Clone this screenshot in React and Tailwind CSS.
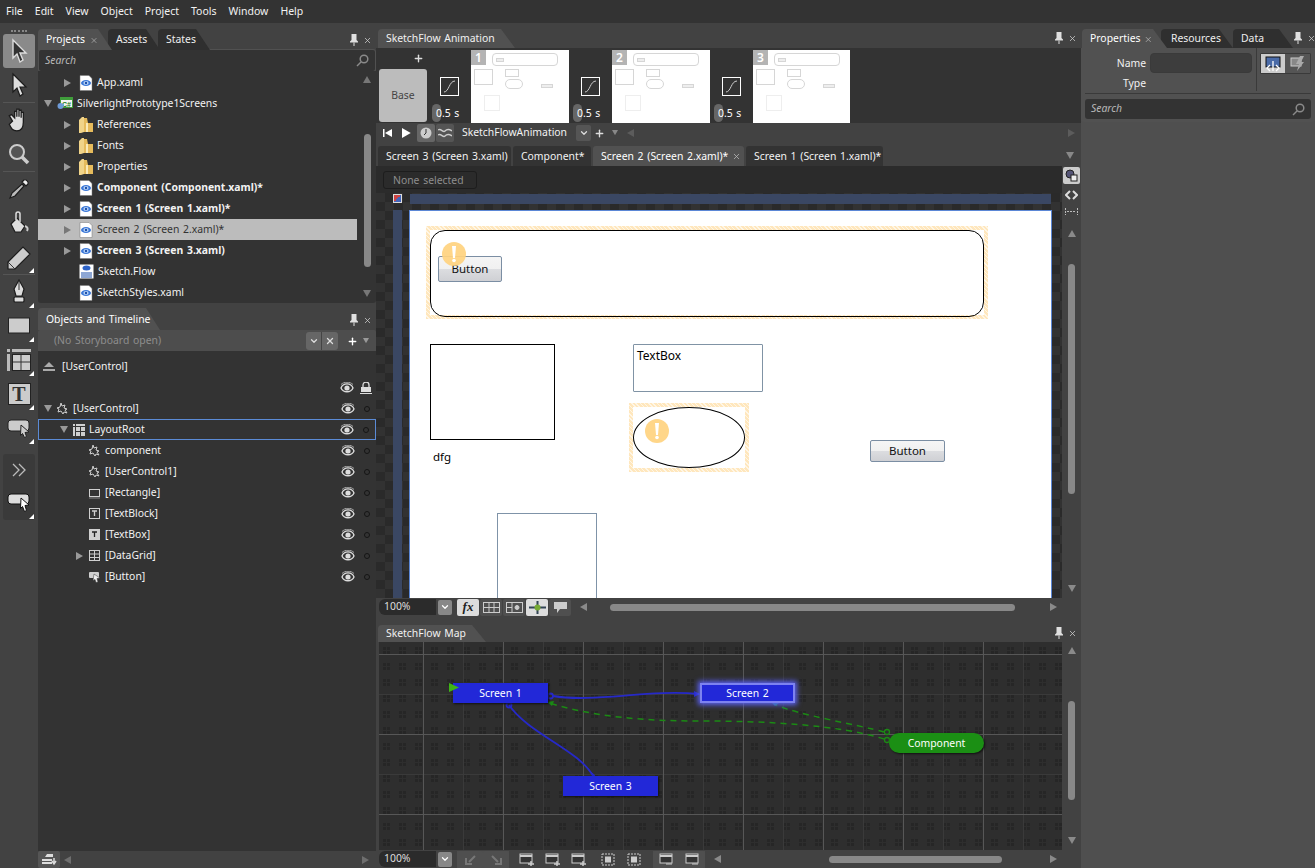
import { ChevronDown, Plus, X } from "lucide-react";

const ui = "font-['Noto_Sans',sans-serif]";

function Tri({ dir = "right", className = "" }) {
  const pts = { right: "1,1 8,5 1,9", left: "8,1 1,5 8,9", up: "5,1 9,8 1,8", down: "1,1 9,1 5,8" }[dir];
  return (
    <svg width="10" height="10" viewBox="0 0 10 10" className={`shrink-0 ${className}`}>
      <polygon points={pts} fill="currentColor" />
    </svg>
  );
}

function Pin() {
  return (
    <svg width="10" height="12" viewBox="0 0 10 12">
      <path d="M2.5 0h5v6l1.5 1.5v1H1v-1L2.5 6z" fill="#e0e0e0" />
      <path d="M5 8.5V12" stroke="#e0e0e0" />
    </svg>
  );
}

function PanelActions() {
  return (
    <div className="flex items-center gap-[4px] text-[#d0d0d0]">
      <Pin />
      <X size={9} strokeWidth={2} />
    </div>
  );
}

function Tab({ children, active, className = "" }) {
  return (
    <div
      className={`flex h-full items-center whitespace-nowrap pl-[8px] pr-[14px] pt-px rounded-tl-[4px] [clip-path:polygon(0_0,calc(100%-14px)_0,100%_100%,0_100%)] ${
        active ? "bg-[#515151] text-white" : "bg-[#2f2f2f] text-[#eee]"
      } ${className}`}
    >
      {children}
    </div>
  );
}

function XamlIcon() {
  return (
    <svg width="14" height="16" viewBox="0 0 14 16" className="shrink-0">
      <path d="M1 .5h9l3 3v12H1z" fill="#fff" stroke="#777" strokeWidth=".5" />
      <ellipse cx="7" cy="8" rx="5" ry="3" fill="#3b78d8" />
      <ellipse cx="7" cy="8" rx="2.6" ry="2" fill="#bcd6f7" />
      <circle cx="7" cy="8" r="1.2" fill="#1d4fa8" />
    </svg>
  );
}

function FolderIcon() {
  return (
    <svg width="14" height="16" viewBox="0 0 14 16" className="shrink-0">
      <path d="M0 3l3-3h2v15l-3 1H0z" fill="#f1d489" />
      <path d="M5 1h3l1 5h5v9H5z" fill="#e6bb5c" />
      <path d="M7 6h2v9H7z" fill="#fbeab8" />
    </svg>
  );
}

function ProjectIcon() {
  return (
    <svg width="16" height="14" viewBox="0 0 16 14" className="-ml-[2px] shrink-0">
      <rect x="3" y="0" width="13" height="11" fill="#3f9d3b" />
      <rect x="4" y="3" width="11" height="7" fill="#f3f3f3" />
      <text x="5" y="9.5" fontSize="7" fontWeight="700" fill="#1e7d1a" fontFamily="Liberation Sans">C#</text>
      <circle cx="3.5" cy="9" r="3" fill="#6e9bd8" />
    </svg>
  );
}

function FlowIcon() {
  return (
    <svg width="15" height="15" viewBox="0 0 15 15" className="shrink-0">
      <rect x=".5" y=".5" width="14" height="14" fill="#fff" />
      <ellipse cx="7.5" cy="4" rx="4" ry="2.5" fill="#2d63c8" />
      <path d="M2 9h11M2 11h11M2 13h11" stroke="#1d4fa8" />
    </svg>
  );
}

function TreeRow({ arrow, indent, icon, children, bold, selected, arrowDown }) {
  return (
    <div className={`flex h-[21px] items-center ${selected ? "bg-[#bcbcbc] text-[#333]" : ""} ${bold ? "font-bold" : ""}`} style={{ paddingLeft: indent }}>
      <span className="mr-[6px] flex w-[10px] shrink-0 justify-center">
        {arrow && <Tri dir={arrowDown ? "down" : "right"} className={selected ? "text-[#777]" : "text-[#999]"} />}
      </span>
      {icon}
      <span className="ml-[4px] whitespace-nowrap">{children}</span>
    </div>
  );
}

function Eye() {
  return (
    <svg width="14" height="12" viewBox="0 0 14 12">
      <path d="M1 6c2-5.500 10-5.500 12 0-2 5-10 5-12 0z" fill="none" stroke="#ddd" strokeWidth="1.300" />
      <circle cx="7" cy="6" r="2.600" fill="#ddd" />
      <path d="M1 2.500C4-.5 10-.5 13 2.500" fill="none" stroke="#aaa" />
    </svg>
  );
}

function Dot() {
  return <span className="block h-[6px] w-[6px] rounded-full border border-[#151515]" />;
}

function ObjIcon({ kind }) {
  const c = "#cfcfcf";
  if (kind === "comp")
    return (
      <svg width="12" height="12" viewBox="0 0 12 12" className="shrink-0">
        <path d="M4 0l1 3 3-1-1 3 3 1-2 1 2 3-3-1-1 2-2-3-3 1 1-3-2-1 3-1z" fill="none" stroke={c} />
      </svg>
    );
  if (kind === "grid")
    return (
      <svg width="12" height="12" viewBox="0 0 12 12" className="shrink-0">
        <path d="M0 0h2v2H0zM3 0h9v2H3zM0 3h2v9H0z" fill={c} />
        <path d="M3 3h4v4H3zM8 3h4v4H8zM3 8h4v4H3zM8 8h4v4H8z" fill={c} />
      </svg>
    );
  if (kind === "rect")
    return (
      <svg width="12" height="12" viewBox="0 0 12 12" className="shrink-0">
        <rect x=".5" y="2.500" width="10" height="7" fill="none" stroke={c} />
        <path d="M0 11h11" stroke="#888" />
      </svg>
    );
  if (kind === "t" || kind === "tb")
    return (
      <svg width="12" height="12" viewBox="0 0 12 12" className="shrink-0">
        <rect x=".5" y=".5" width="10" height="10" fill={kind === "tb" ? c : "none"} stroke={c} />
        <path d="M3 3h5M5.500 3v5" stroke={kind === "tb" ? "#222" : c} strokeWidth="1.300" />
      </svg>
    );
  if (kind === "dg")
    return (
      <svg width="12" height="12" viewBox="0 0 12 12" className="shrink-0">
        <rect x=".5" y=".5" width="10" height="10" fill="none" stroke={c} />
        <path d="M1 4h9M1 7.500h9M5.500 1v9" stroke={c} />
      </svg>
    );
  return (
    <svg width="12" height="12" viewBox="0 0 12 12" className="shrink-0">
      <rect x="0" y="1" width="10" height="6" rx="1" fill={c} />
      <path d="M5 3l6 4-3 .5 1 3.500-2 .5-1-3-2 1z" fill="#eee" stroke="#333" strokeWidth=".5" />
    </svg>
  );
}

function ObjRow({ indent, kind, arrow, arrowDown, children, selected }) {
  return (
    <div className={`flex h-[21px] items-center pr-[5px] ${selected ? "border border-[#5b8bd6]" : ""}`} style={{ paddingLeft: indent }}>
      <span className="flex w-[10px] shrink-0 justify-center">{arrow && <Tri dir={arrowDown ? "down" : "right"} className="text-[#999]" />}</span>
      <span className="ml-[4px]"><ObjIcon kind={kind} /></span>
      <span className="ml-[4px] whitespace-nowrap">{children}</span>
      <span className="ml-auto mr-[9px]"><Eye /></span>
      <span className="mr-[1px]"><Dot /></span>
    </div>
  );
}

function Tool({ children, active, corner }) {
  return (
    <div className={`relative flex h-[34px] w-[32px] shrink-0 items-center justify-center rounded-[3px] ${active ? "bg-[#8a8a8a]" : ""}`}>
      {children}
      {corner && <span className="absolute bottom-[1px] right-[1px] h-0 w-0 border-b-[5px] border-l-[5px] border-b-white border-l-transparent" />}
    </div>
  );
}

const toolStroke = { stroke: "#1c1c1c", strokeWidth: 1.2 };

function Toolbar() {
  return (
    <div className="flex w-[38px] shrink-0 flex-col items-center pt-[2px]">
      <div className="mb-[2px] mt-[2px] h-[2px] w-[16px] border-t-2 border-dotted border-[#888]" />
      <Tool active>
        <svg width="22" height="26" viewBox="0 0 22 26"><path d="M5 2l13 13h-6l3 7-3 2-3-8-4 4z" fill="#333" stroke="#ddd" strokeWidth="1.400" /></svg>
      </Tool>
      <Tool>
        <svg width="22" height="26" viewBox="0 0 22 26"><path d="M5 2l13 13h-6l3 7-3 2-3-8-4 4z" fill="#ddd" {...toolStroke} /></svg>
      </Tool>
      <div className="h-px w-[32px] shrink-0 bg-[#555]" />
      <Tool>
        <svg width="26" height="26" viewBox="0 0 24 24"><path d="M6 13L3 8l2-1 3 3V4h2v5-7h2v7-6h2v7-5h2v9c0 6-3 8-6 8-4 0-5-2-7-6z" fill="#ddd" {...toolStroke} /></svg>
      </Tool>
      <Tool>
        <svg width="24" height="24" viewBox="0 0 24 24"><circle cx="10" cy="10" r="7" fill="#555" stroke="#ccc" strokeWidth="2" /><path d="M15 15l6 6" stroke="#ccc" strokeWidth="3.500" /></svg>
      </Tool>
      <div className="h-px w-[32px] shrink-0 bg-[#555]" />
      <Tool>
        <svg width="24" height="24" viewBox="0 0 24 24"><path d="M3 21l2-5L15 7l2 2L8 19z" fill="#bbb" {...toolStroke} /><path d="M15 5l2-2c2-1 5 2 4 4l-2 2z" fill="#eee" {...toolStroke} /></svg>
      </Tool>
      <Tool>
        <svg width="24" height="24" viewBox="0 0 24 24"><path d="M4 13l6-6 8 8-4 6H8z" fill="#ddd" {...toolStroke} /><path d="M9 9V3a2 2 0 0 1 4 0v8" fill="none" stroke="#ddd" strokeWidth="1.500" /><path d="M18 15c3 1 3 3 2 5" stroke="#ccc" fill="none" strokeWidth="2" /></svg>
      </Tool>
      <Tool corner>
        <svg width="26" height="26" viewBox="0 0 26 26"><path d="M2 18L17 3l7 7-15 15H2z" fill="#ccc" {...toolStroke} /><path d="M2 18l7 7" stroke="#333" /></svg>
      </Tool>
      <div className="h-px w-[32px] shrink-0 bg-[#555]" />
      <Tool corner>
        <svg width="22" height="26" viewBox="0 0 22 26"><path d="M11 1l5 9-2 7H8l-2-7z" fill="#ddd" {...toolStroke} /><path d="M11 2v9" stroke="#333" /><rect x="6" y="18" width="10" height="5" rx="1" fill="#ddd" {...toolStroke} /></svg>
      </Tool>
      <Tool corner>
        <svg width="24" height="20" viewBox="0 0 24 20"><rect x="1.500" y="2" width="21" height="15" fill="#ccc" stroke="#222" /></svg>
      </Tool>
      <Tool corner>
        <svg width="24" height="24" viewBox="0 0 24 24"><path d="M0 1h3v3H0zM5 1h19v3H5zM0 6h3v17H0z" fill="#bbb" /><rect x="5.500" y="6.500" width="18" height="16" fill="#ccc" stroke="#222" /><path d="M14 7v15M6 14h17" stroke="#333" /></svg>
      </Tool>
      <Tool corner>
        <div className="flex h-[22px] w-[23px] items-center justify-center border border-[#222] bg-[#ccc] font-['Liberation_Serif',serif] text-[20px] font-bold leading-none text-[#333]">T</div>
      </Tool>
      <Tool corner>
        <svg width="24" height="22" viewBox="0 0 24 22"><rect x="1" y="3" width="21" height="11" rx="3" fill="#ccc" stroke="#222" /><path d="M14 8l8 7-4 .5 1.500 4-2 1-2-4-2 2z" fill="#ccc" stroke="#222" /></svg>
      </Tool>
      <div className="mt-[9px] flex h-[66px] w-[32px] shrink-0 flex-col items-center rounded-[3px] bg-[#3a3a3a]">
        <div className="flex h-[32px] shrink-0 items-center justify-center">
          <svg width="16" height="16" viewBox="0 0 16 16" fill="none" stroke="#bbb" strokeWidth="1.300"><path d="M2 2l6 6-6 6M8 2l6 6-6 6" /></svg>
        </div>
        <Tool corner>
          <svg width="24" height="22" viewBox="0 0 24 22"><rect x="1" y="2" width="21" height="10" rx="3" fill="#ddd" stroke="#111" /><path d="M14 6l8 7-4 .5 1.500 5-2 1-2-5-2 2z" fill="#fff" stroke="#111" /></svg>
        </Tool>
      </div>
    </div>
  );
}

function VScroll({ top, height, className = "" }) {
  return (
    <div className={`flex w-[18px] shrink-0 flex-col items-center text-[#8a8a8a] ${className}`}>
      <div className="mt-[4px]"><Tri dir="up" /></div>
      <div className="w-[7px] rounded-full bg-[#888]" style={{ marginTop: top, height }} />
      <div className="mt-auto mb-[4px]"><Tri dir="down" /></div>
    </div>
  );
}

function LeftColumn() {
  const objs = [
    ["comp", "component"],
    ["comp", "[UserControl1]"],
    ["rect", "[Rectangle]"],
    ["t", "[TextBlock]"],
    ["tb", "[TextBox]"],
    ["dg", "[DataGrid]", true],
    ["btn", "[Button]"],
  ];
  return (
    <div className="flex w-[338px] shrink-0 flex-col">
      <div className="flex h-[24px] items-end justify-between pr-[4px]">
        <div className="flex h-[21px]">
          <Tab active className="relative z-10 w-[74px]">Projects <X size={9} className="ml-[5px] text-[#bbb]" /></Tab>
          <Tab className="-ml-[4px] w-[52px] pl-[7px]">Assets</Tab>
          <Tab className="-ml-[2px] w-[52px]">States</Tab>
        </div>
        <div className="mb-[4px]"><PanelActions /></div>
      </div>
      <div className="mx-px flex h-[21px] items-center justify-between rounded-[2px] bg-[#333] px-[6px] italic text-[#b8b8b8] shadow-[0_0_0_1px_#515151]">
        Search
        <svg width="13" height="13" viewBox="0 0 13 13" fill="none" stroke="#8a8a8a" strokeWidth="1.500"><circle cx="8" cy="5" r="3.800" /><path d="M5 8l-4 4" /></svg>
      </div>
      <div className="flex h-[232px] rounded-b-[3px] bg-[#333]">
        <div className="w-[319px] shrink-0 pt-px">
          <TreeRow arrow indent={25} icon={<XamlIcon />}>App.xaml</TreeRow>
          <TreeRow arrow arrowDown indent={5} icon={<ProjectIcon />}>SilverlightPrototype1Screens</TreeRow>
          <TreeRow arrow indent={25} icon={<FolderIcon />}>References</TreeRow>
          <TreeRow arrow indent={25} icon={<FolderIcon />}>Fonts</TreeRow>
          <TreeRow arrow indent={25} icon={<FolderIcon />}>Properties</TreeRow>
          <TreeRow arrow bold indent={25} icon={<XamlIcon />}>Component (Component.xaml)*</TreeRow>
          <TreeRow arrow bold indent={25} icon={<XamlIcon />}>Screen 1 (Screen 1.xaml)*</TreeRow>
          <TreeRow arrow selected indent={25} icon={<XamlIcon />}>Screen 2 (Screen 2.xaml)*</TreeRow>
          <TreeRow arrow bold indent={25} icon={<XamlIcon />}>Screen 3 (Screen 3.xaml)</TreeRow>
          <TreeRow indent={25} icon={<FlowIcon />}>Sketch.Flow</TreeRow>
          <TreeRow indent={25} icon={<XamlIcon />}>SketchStyles.xaml</TreeRow>
        </div>
        <VScroll top={49} height={133} className="ml-auto text-[#777]" />
      </div>
      <div className="mt-[5px] flex h-[22px] items-end justify-between pr-[4px]">
        <Tab active className="h-[21px] w-[122px] pt-[3px]">Objects and Timeline</Tab>
        <div className="mb-[4px]"><PanelActions /></div>
      </div>
      <div className="flex h-[21px] items-center rounded-t-[2px] bg-[#4d4d4d] pl-[16px] pr-[5px] pt-px text-[#8e8e8e]">
        (No Storyboard open)
        <div className="ml-auto flex h-[18px] w-[32px] overflow-hidden rounded-[3px] bg-[#666] text-[#ddd]">
          <span className="flex w-1/2 items-center justify-center border-r border-[#444]"><ChevronDown size={10} strokeWidth={3} /></span>
          <span className="flex w-1/2 items-center justify-center"><X size={10} strokeWidth={3} /></span>
        </div>
        <Plus size={11} strokeWidth={3} className="ml-[9px] text-white" />
        <Tri dir="down" className="ml-[3px] scale-75 text-[#999]" />
      </div>
      <div className="flex min-h-0 flex-1 flex-col bg-[#333] pt-[5px]">
        <div className="flex h-[21px] items-center pl-[4px]">
          <svg width="14" height="12" viewBox="0 0 14 12"><path d="M7 1l5 5H2z" fill="#aaa" /><path d="M1 8h12v2H1z" fill="#aaa" /></svg>
          <span className="ml-[6px]">[UserControl]</span>
        </div>
        <div className="flex h-[21px] items-center justify-end pr-[4px]">
          <Eye />
          <svg width="12" height="12" viewBox="0 0 12 12" className="ml-[6px]"><path d="M3 5V3a3 3 0 0 1 6 0v2" fill="none" stroke="#ddd" strokeWidth="1.300" /><rect x="1" y="5" width="10" height="5" fill="#ddd" /><path d="M0 11.500h12" stroke="#ddd" /></svg>
        </div>
        <ObjRow indent={5} kind="comp" arrow arrowDown>[UserControl]</ObjRow>
        <ObjRow indent={20} kind="grid" arrow arrowDown selected>LayoutRoot</ObjRow>
        {objs.map(([kind, label, arrow]) => (
          <ObjRow key={label} indent={37} kind={kind} arrow={arrow}>{label}</ObjRow>
        ))}
      </div>
      <div className="flex h-[17px] shrink-0 items-center bg-[#424242] pr-[5px] text-[#6e6e6e]">
        <div className="flex h-[17px] w-[22px] items-center justify-center rounded-[2px] bg-[#555]">
          <svg width="15" height="12" viewBox="0 0 15 12"><path d="M3 3l2-3h6v3zM0 5h10v2H0zM0 8h10v2H0z" fill="#ddd" /><path d="M12 4v5M10 7l2 3 2-3" stroke="#ddd" fill="none" strokeWidth="1.500" /></svg>
        </div>
        <Tri dir="left" className="ml-[3px]" />
        <Tri dir="right" className="ml-auto" />
      </div>
    </div>
  );
}

function Thumb({ n, w = 98 }) {
  const line = "absolute border border-[#d6d6d6]";
  return (
    <div className="relative h-[73px] shrink-0 bg-white" style={{ width: w }}>
      <div className={`${line} left-[21px] top-[3px] h-[13px] w-[66px] rounded-[4px]`} />
      <div className={`${line} left-[25px] top-[8px] h-[4px] w-[8px] bg-[#eee]`} />
      <div className={`${line} left-[3px] top-[19px] h-[16px] w-[19px]`} />
      <div className={`${line} left-[34px] top-[19px] h-[8px] w-[14px]`} />
      <div className={`${line} left-[34px] top-[29px] h-[10px] w-[18px] rounded-full`} />
      <div className={`${line} left-[70px] top-[34px] h-[4px] w-[12px] bg-[#eee]`} />
      <div className={`${line} left-[13px] top-[45px] h-[16px] w-[16px] border-[#eee]`} />
      <div className="absolute left-0 top-0 flex h-[15px] w-[15px] items-center justify-center bg-[#b4b4b4] text-[12px] font-semibold text-white">{n}</div>
    </div>
  );
}

function Transition() {
  return (
    <div className="relative h-[73px] w-[43px] shrink-0">
      <div className="absolute left-[12px] top-[27px] flex h-[19px] w-[19px] items-center justify-center border border-white">
        <svg width="15" height="15" viewBox="0 0 15 15"><path d="M2 13c5 0 5-11 11-11" fill="none" stroke="#ccc" /></svg>
      </div>
      <div className="absolute bottom-[1px] left-[4px] h-[18px] w-[9px] rounded-full bg-[#666]" />
      <div className="absolute bottom-[1px] left-[8px] whitespace-nowrap text-white">0.5 s</div>
    </div>
  );
}

function AnimationPanel() {
  return (
    <div>
      <div className="flex h-[22px] items-end justify-between bg-[#424242] pr-[4px]">
        <div className="ml-[2px] flex h-[19px] w-[137px] items-center rounded-tl-[4px] bg-[#515151] pl-[8px] pt-px [clip-path:polygon(0_0,calc(100%-14px)_0,100%_100%,0_100%)]">SketchFlow Animation</div>
        <div className="mb-[4px]"><PanelActions /></div>
      </div>
      <div className="flex h-[75px] items-start bg-[#333] pt-[2px]">
        <div className="relative h-[73px] w-[52px] shrink-0">
          <Plus size={11} strokeWidth={3} className="absolute left-[37px] top-[3px] text-[#ddd]" />
          <div className="absolute bottom-[1px] left-[3px] flex h-[53px] w-[48px] items-center justify-center rounded-[3px] bg-[#bcbcbc] text-[#444]">Base</div>
        </div>
        <Transition />
        <Thumb n={1} />
        <Transition />
        <Thumb n={2} />
        <Transition />
        <Thumb n={3} w={97} />
      </div>
      <div className="flex h-[20px] items-center bg-[#424242] pl-[7px]">
        <svg width="10" height="10" viewBox="0 0 10 10" className="text-white"><path d="M0 1h1.500v8H0zM9 1v8L2 5z" fill="currentColor" /></svg>
        <Tri dir="right" className="ml-[9px] scale-125 text-white" />
        <div className="ml-[5px] flex h-[18px] w-[18px] items-center justify-center rounded-[2px] bg-[#666]">
          <svg width="12" height="12" viewBox="0 0 12 12"><circle cx="6" cy="6" r="5.500" fill="#ccc" /><path d="M6 2v4l-2 2" stroke="#333" fill="none" /></svg>
        </div>
        <div className="ml-px flex h-[18px] w-[18px] items-center justify-center rounded-[2px] bg-[#555]">
          <svg width="14" height="10" viewBox="0 0 14 10" fill="none" stroke="#ccc" strokeWidth="1.500"><path d="M0 2c3-2 5 3 7 1s4-2 7 0M0 7c3-2 5 3 7 1s4-2 7 0" /></svg>
        </div>
        <span className="ml-[8px] w-[114px]">SketchFlowAnimation</span>
        <div className="flex h-[16px] w-[15px] items-center justify-center rounded-[2px] bg-[#555] text-[#ddd]"><ChevronDown size={10} strokeWidth={3} /></div>
        <Plus size={11} strokeWidth={3} className="ml-[3px] text-[#ddd]" />
        <Tri dir="down" className="ml-[5px] scale-75 text-[#888]" />
        <Tri dir="left" className="ml-[6px] text-[#5c5c5c]" />
        <Tri dir="right" className="ml-auto mr-[4px] text-[#5c5c5c]" />
      </div>
    </div>
  );
}

function DocTab({ children, active, w }) {
  return (
    <div className={`flex h-[20px] items-center whitespace-nowrap rounded-t-[3px] pl-[8px] pt-px ${active ? "bg-[#515151] text-white" : "bg-[#333]"}`} style={{ width: w }}>
      {children}
      {active && <X size={9} className="ml-[4px] text-[#bbb]" />}
    </div>
  );
}

function Hatch({ className = "" }) {
  return <div className={`absolute border-4 [border-image:repeating-linear-gradient(45deg,#ffe7bd_0,#ffe7bd_2px,#fff6e6_2px,#fff6e6_3px)_4] ${className}`} />;
}

function Warn({ className = "" }) {
  return (
    <svg width="24" height="24" viewBox="0 0 24 24" className={`absolute ${className}`}>
      <circle cx="12" cy="12" r="12" fill="#ffd27f" fillOpacity=".92" />
      <path d="M10 4h4l-1 12h-2z" fill="#fff" />
      <circle cx="12" cy="18.500" r="1.800" fill="#fff" />
    </svg>
  );
}

function SkButton({ className = "" }) {
  return (
    <div className={`absolute flex items-center justify-center rounded-[2px] border border-[#7b8ea3] bg-[linear-gradient(#f5f5f5_0,#f0f0f0_50%,#dcdde0_50%,#cfd0d4_100%)] text-[11.500px] text-[#111] ${className}`}>Button</div>
  );
}

function Artboard() {
  return (
    <div className="relative h-[388px] w-[643px] overflow-hidden border-x border-t border-[#5b87d6] bg-white text-black">
      <Hatch className="left-[16px] top-[15px] h-[93px] w-[562px]" />
      <div className="absolute left-[20px] top-[19px] h-[87px] w-[554px] rounded-[15px] border border-black" />
      <SkButton className="left-[28px] top-[45px] h-[26px] w-[64px]" />
      <Warn className="left-[32px] top-[31px]" />
      <div className="absolute left-[20px] top-[133px] h-[96px] w-[125px] border border-black" />
      <div className="absolute left-[23px] top-[237px] text-[11.500px]">dfg</div>
      <div className="absolute left-[223px] top-[133px] h-[48px] w-[130px] rounded-[1px] border border-[#8093a5] pl-[3px] text-[12px] leading-[22px]">TextBox</div>
      <Hatch className="left-[219px] top-[192px] h-[69px] w-[120px]" />
      <div className="absolute left-[223px] top-[196px] h-[61px] w-[112px] rounded-[50%] border border-black" />
      <Warn className="left-[235px] top-[208px]" />
      <SkButton className="left-[460px] top-[229px] h-[22px] w-[75px]" />
      <div className="absolute left-[87px] top-[302px] h-[100px] w-[100px] border border-[#7f93a8]" />
    </div>
  );
}

function ZoomBox() {
  return (
    <div className="flex items-center">
      <div className="flex h-[16px] w-[57px] items-center rounded-l-[6px] bg-[#2b2b2b] pl-[5px] text-[#ddd]">100%</div>
      <div className="ml-[2px] flex h-[15px] w-[14px] items-center justify-center rounded-[2px] bg-[#888] text-white"><ChevronDown size={10} strokeWidth={3} /></div>
    </div>
  );
}

function MiniBtn({ children, active, w = 22 }) {
  return <div className={`flex h-[17px] shrink-0 items-center justify-center rounded-[2px] ${active ? "bg-[#ddd]" : "bg-[#4f4f4f]"}`} style={{ width: w }}>{children}</div>;
}

function HBar({ pad, thumb, left }) {
  return (
    <div className="flex min-w-0 flex-1 items-center text-[#8a8a8a]" style={{ paddingLeft: pad }}>
      <Tri dir="left" />
      <div className="h-[7px] rounded-full bg-[#888]" style={{ marginLeft: left, width: thumb }} />
      <Tri dir="right" className="ml-auto mr-[22px]" />
    </div>
  );
}

function DocPanel() {
  const tabs = [
    ["Screen 3 (Screen 3.xaml)", 133],
    ["Component*", 78],
    ["Screen 2 (Screen 2.xaml)*", 151, true],
    ["Screen 1 (Screen 1.xaml)*", 137],
  ];
  return (
    <div className="flex h-[482px] flex-col bg-[#424242] pb-[9px]">
      <div className="flex h-[23px] shrink-0 items-end gap-[2px] pl-[2px]">
        {tabs.map(([label, w, active]) => <DocTab key={label} w={w} active={active}>{label}</DocTab>)}
        <Tri dir="down" className="mb-[5px] ml-auto mr-[6px] text-[#888]" />
      </div>
      <div className="flex min-h-0 flex-1">
        <div className="flex min-w-0 flex-1 flex-col bg-[#2b2b2b]">
          <div className="flex h-[27px] shrink-0 items-start pl-[7px] pt-[5px]">
            <div className="flex h-[18px] w-[94px] items-center rounded-[3px] border border-[#1d1d1d] pl-[9px] pt-px text-[#8e8e8e]">None selected</div>
          </div>
          <div className="min-h-0 flex-1 bg-[repeating-conic-gradient(#2a2a2a_0_25%,#323232_0_50%)] bg-[length:18px_18px]">
            <div className="flex h-[17px] items-start pl-[17px]">
              <span className="mt-[1px] block h-[9px] w-[9px] border border-[#ddd] bg-[linear-gradient(135deg,#c44_50%,#46b_50%)]" />
              <span className="ml-[8px] mt-px block h-[10px] flex-1 bg-[#3a4763]" />
              <span className="w-[11px]" />
            </div>
            <div className="flex">
              <span className="ml-[17px] mr-[7px] block h-[388px] w-[9px] bg-[#3a4763]" />
              <Artboard />
            </div>
          </div>
        </div>
        <div className="flex w-[19px] shrink-0 flex-col items-center bg-[#424242] pt-px text-[#8a8a8a]">
          <div className="flex h-[17px] w-[17px] items-center justify-center rounded-[2px] bg-[#ccc]">
            <svg width="13" height="13" viewBox="0 0 13 13"><circle cx="5" cy="5" r="4" fill="#557" stroke="#222" /><rect x="6" y="6" width="6" height="6" fill="#eee" stroke="#222" /></svg>
          </div>
          <svg width="13" height="12" viewBox="0 0 13 12" fill="none" stroke="#ddd" strokeWidth="2" className="mt-[5px]"><path d="M5 2L1 6l4 4M8 2l4 4-4 4" /></svg>
          <svg width="13" height="8" viewBox="0 0 13 8" fill="none" stroke="#bbb" className="mt-[7px]"><path d="M.5 0v7M12.500 0v7M2 3.500h9" strokeDasharray="2 1" /></svg>
          <Tri dir="up" className="mt-[13px]" />
          <div className="mt-[25px] h-[230px] w-[7px] rounded-full bg-[#888]" />
          <Tri dir="down" className="mt-auto mb-[4px]" />
        </div>
      </div>
      <div className="flex h-[18px] shrink-0 items-center gap-[1px] pl-[3px]">
        <ZoomBox />
        <div className="ml-[4px] flex gap-[1px]">
          <MiniBtn active><span className="font-['Liberation_Serif',serif] text-[13px] font-bold italic text-[#222]">fx</span></MiniBtn>
          <MiniBtn><svg width="17" height="11" viewBox="0 0 17 11" fill="none" stroke="#ccc"><rect x=".5" y=".5" width="16" height="10" /><path d="M6 0v11M11 0v11M0 5.500h17" /></svg></MiniBtn>
          <MiniBtn><svg width="17" height="11" viewBox="0 0 17 11" fill="none" stroke="#ccc"><rect x=".5" y=".5" width="16" height="10" /><path d="M6 0v11M0 5.500h6" /><circle cx="11" cy="5.500" r="2" fill="#ccc" /></svg></MiniBtn>
          <MiniBtn active><svg width="17" height="13" viewBox="0 0 17 13"><path d="M0 6.500h17M8.500 0v13" stroke="#345" strokeWidth="2" /><circle cx="8.500" cy="6.500" r="3" fill="#7a3" /></svg></MiniBtn>
          <MiniBtn><svg width="15" height="13" viewBox="0 0 15 13"><path d="M1 1h13v7H7l-3 4V8H1z" fill="#ccc" /></svg></MiniBtn>
        </div>
        <HBar pad={7} left={21} thumb={405} />
      </div>
    </div>
  );
}

function MapNode({ className = "", children }) {
  return <div className={`absolute flex h-[20px] w-[95px] items-center justify-center pt-[2px] text-white ${className}`}>{children}</div>;
}

function MapPanel() {
  return (
    <div className="flex min-h-0 flex-1 flex-col bg-[#424242]">
      <div className="flex h-[17px] shrink-0 items-end justify-between pr-[4px]">
        <div className="ml-[2px] flex h-[17px] w-[108px] items-center rounded-tl-[4px] bg-[#515151] pl-[8px] [clip-path:polygon(0_0,calc(100%-14px)_0,100%_100%,0_100%)]">SketchFlow Map</div>
        <div className="mb-[3px]"><PanelActions /></div>
      </div>
      <div className="flex min-h-0 flex-1">
        <div className="relative ml-[3px] min-w-0 flex-1 overflow-hidden bg-[#2e2e2e]">
          <svg width="684" height="208" className="absolute left-0 top-0">
            <defs>
              <pattern id="minor" width="16" height="16" patternUnits="userSpaceOnUse" x="4" y="4">
                <path d="M0 1h3v3H0zM4 1h3v3H4zM0 5h3v3H0zM4 5h3v3H4z" fill="#262626" />
              </pattern>
            </defs>
            <rect width="684" height="208" fill="url(#minor)" />
            {[84, 164, 244, 324, 404, 484, 564, 644].map((x) => <path key={x} d={`M${x + 0.5} 0V208`} stroke="#3a3a3a" />)}
            {[52, 132].map((y) => <path key={y} d={`M0 ${y + 0.5}H684`} stroke="#3a3a3a" />)}
            {[44, 124, 204, 284, 364, 444, 524, 604].map((x) => <path key={x} d={`M${x + 0.5} 0V208`} stroke="#575757" />)}
            {[12, 92, 172].map((y) => <path key={y} d={`M0 ${y + 0.5}H684`} stroke="#575757" />)}
            <g fill="none" stroke="#2629c8" strokeWidth="1.800">
              <path d="M174 54C215 61 270 47 320 52" />
              <path d="M130 63C150 92 200 108 214 134" />
              <circle cx="171.500" cy="54" r="2.500" />
              <circle cx="130" cy="63" r="2.500" />
            </g>
            <path d="M315 49l6 3-6 3zM211 129l5 4-1 4z" fill="#2629c8" />
            <g fill="none" stroke="#1b8a14" strokeWidth="1.500" strokeDasharray="6 5">
              <path d="M505 97C460 83 390 79 321 79C270 79 220 76 170 61" />
              <path d="M505 90C480 83 420 73 397 63" />
            </g>
            <g fill="none" stroke="#1b8a14" strokeWidth="1.300">
              <circle cx="508" cy="90" r="2.500" />
              <circle cx="508" cy="98" r="2.500" />
            </g>
            <path d="M168 60l7-1-2 5z" fill="#1b8a14" />
            <path d="M392 60l8 1-4 3z" fill="#1f7f77" />
          </svg>
          <MapNode className="left-[74px] top-[41px] bg-[#2228d8] shadow-[1px_1px_2px_#111]">Screen 1</MapNode>
          <svg width="11" height="12" viewBox="0 0 11 12" className="absolute left-[70px] top-[40px]"><path d="M0 1l10 4.500L0 10z" fill="#3fb516" /></svg>
          <MapNode className="left-[321px] top-[41px] border-2 border-[#7d82f0] bg-[#2228d8] pt-0 shadow-[0_0_5px_2px_#5a60f0]">Screen 2</MapNode>
          <MapNode className="left-[184px] top-[134px] bg-[#2228d8] shadow-[1px_1px_2px_#111]">Screen 3</MapNode>
          <MapNode className="left-[510px] top-[91px] rounded-[10px] bg-[#1b8f14] shadow-[1px_1px_2px_#111]">Component</MapNode>
        </div>
        <div className="flex w-[19px] shrink-0 flex-col items-center text-[#8a8a8a]">
          <Tri dir="up" className="mt-[4px]" />
          <div className="mt-[45px] h-[99px] w-[7px] rounded-full bg-[#888]" />
          <Tri dir="down" className="mt-auto mb-[4px]" />
        </div>
      </div>
      <div className="flex h-[18px] shrink-0 items-center pl-[3px]">
        <ZoomBox />
        <div className="ml-[5px] flex gap-[4px]">
          <div className="flex bg-[#4f4f4f]">
            {["M12 3L6 9M3 5v6h6", "M3 3l6 6M12 5v6H6"].map((d) => (
              <MiniBtn key={d} w={26}><svg width="15" height="13" viewBox="0 0 15 13"><path d={d} fill="none" stroke="#777" strokeWidth="2" /></svg></MiniBtn>
            ))}
          </div>
          <div className="flex">
            {["a", "b", "c"].map((k) => (
              <div key={k} className="flex h-[17px] w-[26px] items-center justify-center">
                <svg width="15" height="13" viewBox="0 0 15 13"><rect x="1" y="1" width="12" height="9" fill="#333" stroke="#ccc" /><path d="M1 3h12" stroke="#ccc" strokeWidth="2" /><path d="M9 11h6M12 8v5" stroke="#ccc" strokeWidth="1.500" /></svg>
              </div>
            ))}
          </div>
          <div className="flex">
            {["d", "e"].map((k) => (
              <div key={k} className="flex h-[17px] w-[26px] items-center justify-center">
                <svg width="15" height="13" viewBox="0 0 15 13"><rect x="1" y="1" width="12" height="11" fill="none" stroke="#ccc" strokeDasharray="2 1" /><rect x="4" y="3.500" width="6" height="6" fill="#ccc" /></svg>
              </div>
            ))}
          </div>
          <div className="ml-[2px] flex bg-[#4f4f4f]">
            {["f", "g"].map((k) => (
              <MiniBtn key={k} w={26}><svg width="15" height="13" viewBox="0 0 15 13"><rect x="1" y="1" width="12" height="9" fill="#333" stroke="#ccc" /><path d="M1 3h12" stroke="#ccc" strokeWidth="2" /><path d="M8 10v2M10 10v2M12 10v2" stroke="#ccc" /></svg></MiniBtn>
            ))}
          </div>
        </div>
        <HBar pad={8} left={106} thumb={173} />
      </div>
    </div>
  );
}

function CenterColumn() {
  return (
    <div className="flex w-[705px] shrink-0 flex-col">
      <AnimationPanel />
      <DocPanel />
      <MapPanel />
    </div>
  );
}

function RightColumn() {
  return (
    <div className="flex min-w-0 flex-1 flex-col bg-[#4f4f4f]">
      <div className="flex h-[22px] items-end justify-between bg-[#424242] pr-[4px]">
        <div className="ml-px flex h-[19px]">
          <Tab active className="relative z-10 w-[85px]">Properties <X size={9} className="ml-[4px] text-[#bbb]" /></Tab>
          <Tab className="-ml-[6px] w-[72px] pl-[10px]">Resources</Tab>
          <Tab className="w-[60px]">Data</Tab>
        </div>
        <div className="mb-[4px]"><PanelActions /></div>
      </div>
      <div className="flex h-[74px] flex-col rounded-b-[3px] bg-[#515151] px-[4px]">
        <div className="flex h-[46px] shrink-0 border-b border-[#3a3a3a]">
          <div className="w-[62px] pt-[5px] text-right leading-[20px]">
            <div>Name</div>
            <div>Type</div>
          </div>
          <div className="ml-[4px] mt-[5px] h-[20px] w-[103px] rounded-[4px] border border-[#3a3a3a] bg-[#3d3d3d]" />
          <div className="ml-[4px] h-[43px] border-l border-[#3a3a3a]" />
          <div className="ml-[3px] mt-[5px] flex h-[21px] overflow-hidden rounded-[1px] border border-[#3a3a3a]">
            <div className="flex w-[25px] items-center justify-center bg-[#ccc]">
              <svg width="17" height="16" viewBox="0 0 17 16"><rect x="1" y="1" width="14" height="10" fill="#4a6ba8" stroke="#111" /><path d="M8 5v10M5 9l-3 3 3 3M11 9l3 3-3 3" fill="none" stroke="#fff" strokeWidth="1.300" /></svg>
            </div>
            <div className="flex w-[25px] items-center justify-center bg-[#555]">
              <svg width="16" height="15" viewBox="0 0 16 15"><rect x="1" y="2" width="10" height="8" fill="#888" stroke="#ccc" /><path d="M10 0L6 8h3L7 15l7-9h-3l3-6z" fill="#aaa" /></svg>
            </div>
          </div>
        </div>
        <div className="mt-[5px] flex h-[20px] shrink-0 items-center justify-between rounded-[3px] bg-[#333] px-[6px] italic text-[#b8b8b8]">
          Search
          <svg width="13" height="13" viewBox="0 0 13 13" fill="none" stroke="#8a8a8a" strokeWidth="1.500"><circle cx="8" cy="5" r="3.800" /><path d="M5 8l-4 4" /></svg>
        </div>
      </div>
    </div>
  );
}

export default function App() {
  const menu = ["File", "Edit", "View", "Object", "Project", "Tools", "Window", "Help"];
  return (
    <div className={`${ui} flex h-[868px] w-[1315px] flex-col overflow-hidden bg-[#424242] text-[10.4px] text-[#f2f2f2] [word-spacing:1px]`}>
      <div className="flex h-[23px] shrink-0 items-center gap-[12px] bg-[#333] pl-[6px] text-[10.500px]">
        {menu.map((m) => <span key={m}>{m}</span>)}
      </div>
      <div className="flex min-h-0 flex-1 pt-[3px]">
        <Toolbar />
        <LeftColumn />
        <CenterColumn />
        <RightColumn />
      </div>
    </div>
  );
}
